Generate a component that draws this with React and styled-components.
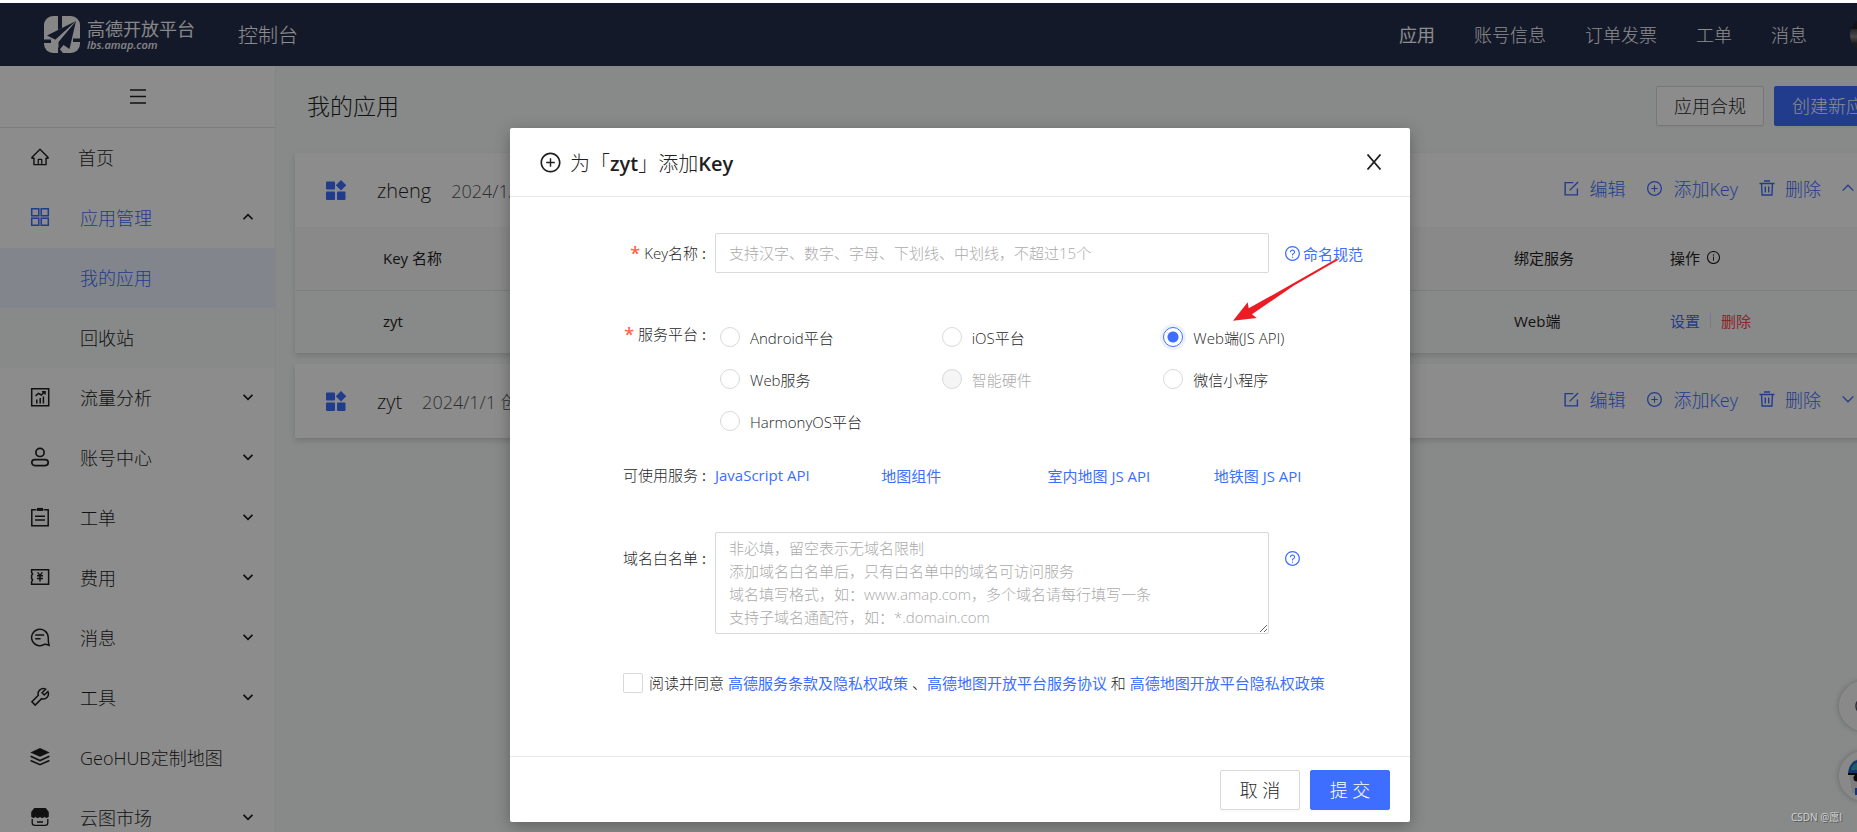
import { useState } from "react";
import styled, { createGlobalStyle } from "styled-components";
import {
  AiOutlineHome,
  AiOutlineInfoCircle,
  AiOutlinePlusCircle,
  AiOutlineQuestionCircle,
} from "react-icons/ai";

const GlobalStyle = createGlobalStyle`
  * {
    box-sizing: border-box;
  }

  body {
    margin: 0;
    overflow: hidden;
    background-color: #fff;
    color: #1f1f1f;
    font-family: "Open Sans", "Noto Sans CJK SC", sans-serif;
    font-size: 15px;
    font-weight: 300;
  }

  button, input, textarea {
    font: inherit;
    color: inherit;
  }

  button {
    padding: 0;
    border: 0;
    background: none;
    cursor: pointer;
  }

  a {
    color: #3d6eff;
    text-decoration: none;
  }

  svg {
    display: block;
    flex-shrink: 0;
  }
`;

const Shell = styled.div`
  position: relative;
  display: flex;
  flex-direction: column;
  min-width: 1920px;
  height: 100vh;
  padding-top: 3px;
  overflow: hidden;
`;

/* header */

const StyledHeader = styled.header`
  display: flex;
  align-items: center;
  flex-shrink: 0;
  height: 63px;
  padding: 0 36px 0 44px;
  background-color: #262e4e;
  color: #fff;
`;

const Logo = styled.a`
  display: flex;
  align-items: center;
  gap: 7px;
  color: #f4f4f4;
`;

const LogoText = styled.span`
  display: flex;
  flex-direction: column;
  font-size: 18px;
  line-height: 20px;
  font-weight: 400;
`;

const LogoDomain = styled.small`
  font-size: 11px;
  line-height: 12px;
  font-weight: 600;
  font-style: italic;
`;

const ConsoleLink = styled.a`
  margin-left: 43px;
  padding-bottom: 1px;
  color: inherit;
  font-size: 20px;
`;

const StyledNav = styled.nav`
  display: flex;
  align-items: center;
  gap: 39px;
  margin-left: auto;
  font-size: 18px;
`;

const NavLink = styled.a`
  padding-bottom: 2px;
  color: #fff;
  font-weight: ${(props) => (props.$active ? 400 : 300)};
`;

const Avatar = styled.span`
  width: 34px;
  height: 34px;
  margin-left: 4px;
  border-radius: 50%;
  background: linear-gradient(#222 32%, #444 32%, #888 55%, #333 75%);
`;

/* sidebar */

const Columns = styled.div`
  display: flex;
  flex: 1;
  min-height: 0;
`;

const Sidebar = styled.aside`
  width: 276px;
  flex-shrink: 0;
  border-right: 1px solid #f0f0f0;
  overflow: hidden;
`;

const Toggle = styled.button`
  display: flex;
  align-items: center;
  justify-content: center;
  width: 100%;
  height: 62px;
  border-bottom: 1px solid #e4e4e4;
`;

const MenuLink = styled.a`
  display: flex;
  align-items: center;
  gap: ${(props) => props.$gap || 30}px;
  height: 60px;
  padding: 0 22px 2px ${(props) => (props.$sub ? 80 : 30)}px;
  background-color: ${(props) => props.$bg || "transparent"};
  color: ${(props) => (props.$active ? "#3d6eff" : "#1f1f1f")};
  font-size: 18px;

  > span + svg {
    margin-left: auto;
    color: #1f1f1f;
  }
`;

/* content */

const Main = styled.main`
  flex: 1;
  min-width: 0;
  padding: 20px 20px 0 19px;
  background-color: #f7fbf9;
`;

const TitleBar = styled.div`
  display: flex;
  align-items: center;
  gap: 10px;
  height: 40px;
  margin-bottom: 27px;
`;

const Title = styled.h1`
  margin: 0 auto 0 12px;
  padding-bottom: 2px;
  font-size: 23px;
  font-weight: 300;
`;

const Button = styled.button`
  min-width: 80px;
  height: 40px;
  padding: 0 17px;
  border: 1px solid ${(props) => (props.$primary ? "#3d6eff" : "#d9d9d9")};
  border-radius: 2px;
  background-color: ${(props) => (props.$primary ? "#3d6eff" : "#fff")};
  color: ${(props) => (props.$primary ? "#fff" : "#1f1f1f")};
  box-shadow: 0 2px 0 rgba(0, 0, 0, 0.02);
  font-size: 18px;
  line-height: 24px;
  white-space: nowrap;
`;

const Card = styled.section`
  margin-bottom: 11px;
  background-color: #fff;
  box-shadow: 0 3px 6px rgba(0, 0, 0, 0.14);
`;

const CardHead = styled.div`
  display: flex;
  align-items: center;
  height: 74px;
  padding: 0 46px 0 31px;
`;

const AppName = styled.h2`
  margin: 0 20px 0 31px;
  font-size: 20px;
  font-weight: 300;
`;

const AppDate = styled.span`
  color: #555;
  font-size: 18px;
`;

const Actions = styled.div`
  display: flex;
  align-items: center;
  gap: 21px;
  margin-left: auto;
  padding-bottom: 4px;
  color: #3d6eff;
`;

const Action = styled.button`
  display: flex;
  align-items: center;
  gap: 10px;
  font-size: 18px;
`;

const KeyTable = styled.table`
  width: 100%;
  border-collapse: collapse;
  table-layout: fixed;
  text-align: left;

  th {
    height: 63px;
    padding: 0 0 2px;
    border-bottom: 1px solid #e4e6e5;
    background-color: #f9f9f9;
    font-weight: 400;
  }

  td {
    height: 63px;
    padding: 0 0 2px;
    background-color: #f7fbf9;
    font-weight: 400;
  }

  th:first-child,
  td:first-child {
    padding-left: 88px;
  }

  th:nth-child(2) {
    width: 156px;
  }

  th:last-child {
    width: 230px;
  }
`;

const Inline = styled.span`
  display: flex;
  align-items: center;
  gap: ${(props) => props.$gap}px;
`;

const Divider = styled.i`
  width: 1px;
  height: 15px;
  background-color: #e0e0e0;
`;

const DangerLink = styled.a`
  color: #f5484d;
`;

/* floating helpers */

const Helpers = styled.div`
  position: absolute;
  right: 31px;
  bottom: 31px;
  display: flex;
  flex-direction: column;
  gap: 20px;
`;

const HelperButton = styled.button`
  display: flex;
  align-items: center;
  justify-content: center;
  width: 50px;
  height: 50px;
  border: 1px solid #fff;
  border-radius: 50%;
  background-color: #fafafa;
  box-shadow: 0 0 6px rgba(0, 0, 0, 0.25);
`;

/* modal */

const Mask = styled.div`
  position: absolute;
  inset: 3px 0 0;
  display: flex;
  align-items: flex-start;
  justify-content: center;
  padding-top: 125px;
  background-color: rgba(0, 0, 0, 0.45);
`;

const Dialog = styled.form`
  position: relative;
  width: 900px;
  border-radius: 2px;
  background-color: #fff;
  box-shadow: 0 4px 16px rgba(0, 0, 0, 0.3);
`;

const DialogHead = styled.div`
  display: flex;
  align-items: center;
  gap: 8px;
  height: 69px;
  padding: 0 28px 0 29px;
  border-bottom: 1px solid #e8e8e8;

  h2 {
    margin: 0 auto 0 0;
    font-size: 20px;
    font-weight: 300;
  }

  b {
    font-weight: 600;
  }
`;

const DialogBody = styled.div`
  padding: 36px 30px 63px 0;

  a {
    font-weight: 400;
  }
`;

const Field = styled.div`
  display: grid;
  grid-template-columns: 205px 1fr;
  margin-bottom: ${(props) => props.$below}px;
`;

const FieldLabel = styled.label`
  display: flex;
  justify-content: flex-end;
  height: ${(props) => props.$height || 40}px;
  padding-right: 9px;
  line-height: ${(props) => props.$height || 40}px;

  &::before {
    content: ${(props) => (props.$required ? '"*"' : "none")};
    margin-right: 4px;
    color: #ff6340;
    font-size: 18px;
    font-weight: 600;
  }

  &::after {
    content: ":";
    margin-left: 4px;
    font-weight: 400;
  }
`;

const FieldBody = styled.div`
  display: flex;
  align-items: ${(props) => props.$align || "center"};
`;

const TextInput = styled.input`
  width: 554px;
  height: 40px;
  padding: 0 13px;
  border: 1px solid #d9d9d9;
  border-radius: 2px;

  &::placeholder {
    color: #aaa;
  }
`;

const TextArea = styled.textarea`
  display: block;
  width: 554px;
  height: 102px;
  padding: 4px 13px;
  border: 1px solid #d9d9d9;
  border-radius: 2px;
  line-height: 23px;
  overflow: hidden;
  resize: vertical;

  &::placeholder {
    color: #aaa;
  }
`;

const HelpLink = styled.a`
  display: flex;
  align-items: center;
  gap: 2px;
  height: ${(props) => props.$height || 40}px;
  margin-left: 15px;
  white-space: nowrap;
`;

const RadioGrid = styled.div`
  display: grid;
  grid-template-columns: repeat(3, 1fr);
  flex: 1;
`;

const RadioLabel = styled.label`
  display: flex;
  align-items: center;
  gap: 10px;
  height: 42px;
  padding-left: 5px;
  color: ${(props) => (props.$disabled ? "#aaa" : "#1f1f1f")};
`;

const Radio = styled.input`
  appearance: none;
  width: 20px;
  height: 20px;
  margin: 0;
  border: 1px solid #d9d9d9;
  border-radius: 50%;
  background-color: #fff;

  &:checked {
    border-color: #3d6eff;
    background: radial-gradient(circle, #3d6eff 5px, #fff 6px);
    box-shadow: 0 0 0 3px #edf2ff;
  }

  &:disabled {
    background-color: #f5f5f5;
  }
`;

const ServiceLinks = styled.div`
  display: grid;
  grid-template-columns: repeat(4, 1fr);
  flex: 1;
`;

const Agreement = styled.div`
  display: flex;
  align-items: center;
  gap: 4px;
  padding-left: 113px;
  white-space: nowrap;

  label {
    display: flex;
    align-items: center;
    gap: 6px;
  }
`;

const Checkbox = styled.input`
  appearance: none;
  width: 20px;
  height: 20px;
  margin: 0;
  border: 1px solid #d9d9d9;
  border-radius: 2px;

  &:checked {
    background-color: #3d6eff;
  }
`;

const DialogFoot = styled.div`
  display: flex;
  justify-content: flex-end;
  gap: 10px;
  padding: 13px 20px 12px;
  border-top: 1px solid #e8e8e8;
`;

const Arrow = styled.svg`
  position: absolute;
  top: 130px;
  left: 722px;
  pointer-events: none;
`;

const Watermark = styled.span`
  position: absolute;
  left: 1791px;
  bottom: 8px;
  color: #d4d4d4;
  font-size: 10px;
  line-height: 14px;
  font-weight: 400;
  text-shadow: 1px 1px 0 #555;
`;

/* icons */

const Icon = ({ size = 20, box = 20, width = 1.5, children }) => (
  <svg
    width={size}
    height={size}
    viewBox={`0 0 ${box} ${box}`}
    fill="none"
    stroke="currentColor"
    strokeWidth={width}
  >
    {children}
  </svg>
);

const Chevron = ({ up, size = 10, width = 1.8 }) => (
  <Icon size={size} box={10} width={width}>
    <path d={up ? "M0.5 7.2 5 2.7l4.5 4.5" : "M0.5 2.8 5 7.3l4.5-4.5"} />
  </Icon>
);

const menuIcons = {
  home: <AiOutlineHome size={20} />,
  apps: (
    <Icon>
      <path d="M1.7 1.7h7.1v7.1H1.7zM11.2 1.7h7.1v7.1h-7.1zM1.7 11.2h7.1v7.1H1.7zM11.2 11.2h7.1v7.1h-7.1z" />
    </Icon>
  ),
  chart: (
    <Icon>
      <path d="M1.7 1.7h17v17h-17z" />
      <path d="M6.8 12.5v4M10.2 11v5.5M13.4 9.5v7M5.5 8.8l3-2.4 2.8 1.6 3.4-3.2M12 4.8h3v2.6" />
    </Icon>
  ),
  user: (
    <Icon width={1.7}>
      <circle cx="10" cy="5.4" r="4.1" />
      <rect x="1.8" y="12.6" width="16.4" height="6" rx="3" />
    </Icon>
  ),
  order: (
    <Icon>
      <path d="M6.5 2.7H1.8v16h16.4v-16h-4.7M5 9.3h10M5 13h10" />
      <path d="M7 2.4h6" strokeWidth="3" />
    </Icon>
  ),
  cost: (
    <Icon>
      <path d="M1.6 2.7h17v14.6h-17v-2.6l1-1.6-1-1.6V8.4l1-1.5-1-1.5z" />
      <path d="m7.6 5.4 2.4 3 2.4-3M7 8.7h6M7 11.4h6M10 8.4v6.2" />
    </Icon>
  ),
  message: (
    <Icon>
      <path d="M18.2 10c0 3 .2 6 .9 8.400-1.500-.6-3-.9-4.300-1.200A8.300 8.300 0 1 1 18.200 10zM5.200 8h9M5.200 11.700h5.400" />
    </Icon>
  ),
  tool: (
    <Icon>
      <path d="M15.6 2.2a5.2 5.2 0 0 0-7.3 6.2L1.9 14.8l3.3 3.3 6.4-6.4a5.2 5.2 0 0 0 6.3-7.2l-3.6 3.5-2.2-2.2z" />
    </Icon>
  ),
  layers: (
    <Icon width={1.6}>
      <path d="M10 1 0.3 5.4 10 9.7l9.7-4.3z" fill="currentColor" stroke="none" />
      <path d="m0.6 9.3 9.4 4.2 9.4-4.2M0.6 13.5l9.4 4.2 9.4-4.2" />
    </Icon>
  ),
  market: (
    <Icon width={1.3}>
      <path
        d="M4.2 1h11.6L18.800 5v4.500c-1.200 2-3.400 1.800-4.400.3-1.100 1.600-3.300 1.600-4.400 0-1.100 1.600-3.300 1.600-4.400 0-1 1.500-3.200 1.700-4.400-.3V5z"
        fill="currentColor"
        stroke="none"
      />
      <path d="M2.2 12v3.800a2.600 2.600 0 0 0 2.600 2.600h10.400a2.600 2.600 0 0 0 2.600-2.600V12M7 15h6" />
    </Icon>
  ),
};

const LogoMark = () => (
  <svg width="36" height="37" viewBox="0 0 36 37">
    <rect width="36" height="37" rx="9" fill="#f4f4f4" />
    <path d="M14 0h4v12l-4 2zM0 23.500h7v3.500H0zM29 22.500h7V26h-7zM14 31l5 6h-5z" fill="#262e4e" />
    <path d="M32 5 3 19.500l9 4.500zM32 5 14.500 26v9l5-6 6 4z" fill="#262e4e" />
    <path d="M32 5 11 24l3 1.500z" fill="#f4f4f4" />
  </svg>
);

const AppIcon = () => (
  <svg width="20" height="20" viewBox="0 0 20 20" fill="#3d6eff">
    <rect y="1.5" width="9" height="8" rx="1" />
    <rect y="11.5" width="9" height="8.500" rx="1" />
    <rect x="11" y="11.5" width="8.500" height="8.500" rx="1" />
    <path d="m15 0 5.2 5.2L15 10.4 9.8 5.2z" />
  </svg>
);

const EditIcon = () => (
  <Icon size={15} box={16} width={1.5}>
    <path d="M10 1.7H1.2v13.1h13.1V8M6 10l9-9" />
  </Icon>
);

const TrashIcon = () => (
  <Icon size={16} box={16} width={1.4}>
    <path d="M0.5 3.5h15M5 1h6M2.5 3.5l.6 11.500h9.800l.6-11.500M6.300 6.500v6M9.700 6.500v6" />
  </Icon>
);

const CloseIcon = () => (
  <Icon size={16} box={16} width={1.8}>
    <path d="M1.500 .5l13 15M14.500 .5l-13 15" />
  </Icon>
);

const Robot = () => (
  <svg width="34" height="42" viewBox="0 0 34 42">
    <path d="M6 6 17 1l11 5 4 12-3 20H5L2 18z" fill="#e4e4e4" />
    <path d="M1 18C2 8 8 4 17 4s15 4 16 14z" fill="#1f62c8" />
    <path d="M4 15c1-6 5-8 13-8s12 2 13 8z" fill="#3fa9b8" />
    <path d="M1 18h32v2H1z" fill="#111" />
    <circle cx="10" cy="23" r="3.5" fill="#111" />
    <circle cx="24" cy="23" r="3.5" fill="#111" />
    <path d="M8 33h18v7H8z" fill="#2460d8" />
  </svg>
);

const menu = [
  { icon: "home", label: "首页", gap: 28 },
  { icon: "apps", label: "应用管理", active: true, open: true },
  { label: "我的应用", sub: true, active: true, bg: "#eef3ff" },
  { label: "回收站", sub: true, bg: "#f7fbf9" },
  { icon: "chart", label: "流量分析", more: true },
  { icon: "user", label: "账号中心", more: true },
  { icon: "order", label: "工单", more: true },
  { icon: "cost", label: "费用", more: true },
  { icon: "message", label: "消息", more: true },
  { icon: "tool", label: "工具", more: true },
  { icon: "layers", label: "GeoHUB定制地图" },
  { icon: "market", label: "云图市场", more: true },
];

const platforms = [
  { label: "Android平台" },
  { label: "iOS平台" },
  { label: "Web端(JS API)" },
  { label: "Web服务" },
  { label: "智能硬件", disabled: true },
  { label: "微信小程序" },
  { label: "HarmonyOS平台" },
];

const services = ["JavaScript API", "地图组件", "室内地图 JS API", "地铁图 JS API"];

const whitelistHint = `非必填，留空表示无域名限制
添加域名白名单后，只有白名单中的域名可访问服务
域名填写格式，如：www.amap.com，多个域名请每行填写一条
支持子域名通配符，如：*.domain.com`;

function AppCard({ name, date, open, children }) {
  return (
    <Card>
      <CardHead>
        <AppIcon />
        <AppName>{name}</AppName>
        <AppDate>{date} 创建</AppDate>
        <Actions>
          <Action><EditIcon />编辑</Action>
          <Action><AiOutlinePlusCircle size={17} />添加Key</Action>
          <Action><TrashIcon />删除</Action>
          <Action aria-label="展开"><Chevron up={open} size={12} width={1.1} /></Action>
        </Actions>
      </CardHead>
      {children}
    </Card>
  );
}

function AddKeyDialog() {
  const [platform, setPlatform] = useState("Web端(JS API)");

  return (
    <Dialog role="dialog" aria-labelledby="dialog-title">
      <DialogHead>
        <AiOutlinePlusCircle size={23} />
        <h2 id="dialog-title">为「<b>zyt</b>」添加<b>Key</b></h2>
        <button type="button" aria-label="关闭"><CloseIcon /></button>
      </DialogHead>
      <DialogBody>
        <Field $below={43}>
          <FieldLabel $required htmlFor="key-name">Key名称</FieldLabel>
          <FieldBody>
            <TextInput id="key-name" placeholder="支持汉字、数字、字母、下划线、中划线，不超过15个" />
            <HelpLink href="#naming"><AiOutlineQuestionCircle size={17} />命名规范</HelpLink>
          </FieldBody>
        </Field>
        <Field $below={13}>
          <FieldLabel as="span" $required $height={36} id="platform-label">服务平台</FieldLabel>
          <RadioGrid role="radiogroup" aria-labelledby="platform-label">
            {platforms.map(({ label, disabled }) => (
              <RadioLabel key={label} $disabled={disabled}>
                <Radio
                  type="radio"
                  name="platform"
                  disabled={disabled}
                  checked={platform === label}
                  onChange={() => setPlatform(label)}
                />
                {label}
              </RadioLabel>
            ))}
          </RadioGrid>
        </Field>
        <Field $below={37}>
          <FieldLabel as="span">可使用服务</FieldLabel>
          <FieldBody>
            <ServiceLinks>
              {services.map((name) => <a key={name} href="#service">{name}</a>)}
            </ServiceLinks>
          </FieldBody>
        </Field>
        <Field $below={38}>
          <FieldLabel htmlFor="whitelist" $height={52}>域名白名单</FieldLabel>
          <FieldBody $align="flex-start">
            <TextArea id="whitelist" placeholder={whitelistHint} />
            <HelpLink href="#whitelist-help" aria-label="帮助" $height={52}>
              <AiOutlineQuestionCircle size={17} />
            </HelpLink>
          </FieldBody>
        </Field>
        <Agreement>
          <label><Checkbox type="checkbox" />阅读并同意</label>
          <span>
            <a href="#terms">高德服务条款及隐私权政策</a> 、<a href="#service-agreement">高德地图开放平台服务协议</a>{" "}
            和 <a href="#privacy">高德地图开放平台隐私权政策</a>
          </span>
        </Agreement>
      </DialogBody>
      <DialogFoot>
        <Button type="button">取 消</Button>
        <Button type="button" $primary>提 交</Button>
      </DialogFoot>
      <Arrow width="110" height="66" viewBox="0 0 110 66" fill="#ed1c24">
        <path d="M1 62.700 15.700 44.300l1 6L46 34 104 1l3 .5L62 27.500 20 56.300l4.700 3.700z" />
      </Arrow>
    </Dialog>
  );
}

export default function App() {
  return (
    <>
      <GlobalStyle />
      <Shell>
        <StyledHeader>
          <Logo href="#home">
            <LogoMark />
            <LogoText>高德开放平台<LogoDomain>lbs.amap.com</LogoDomain></LogoText>
          </Logo>
          <ConsoleLink href="#console">控制台</ConsoleLink>
          <StyledNav>
            <NavLink href="#apps" $active>应用</NavLink>
            <NavLink href="#account">账号信息</NavLink>
            <NavLink href="#invoice">订单发票</NavLink>
            <NavLink href="#tickets">工单</NavLink>
            <NavLink href="#messages">消息</NavLink>
            <Avatar />
          </StyledNav>
        </StyledHeader>
        <Columns>
          <Sidebar>
            <Toggle aria-label="收起菜单">
              <Icon size={16} box={16}><path d="M0 1h16M0 7.500h16M0 14h16" /></Icon>
            </Toggle>
            {menu.map(({ icon, label, sub, active, bg, gap, open, more }) => (
              <MenuLink key={label} href="#menu" $sub={sub} $active={active} $bg={bg} $gap={gap}>
                {menuIcons[icon]}
                <span>{label}</span>
                {(open || more) && <Chevron up={open} />}
              </MenuLink>
            ))}
          </Sidebar>
          <Main>
            <TitleBar>
              <Title>我的应用</Title>
              <Button>应用合规</Button>
              <Button $primary>创建新应用</Button>
            </TitleBar>
            <AppCard name="zheng" date="2024/1/1" open>
              <KeyTable>
                <thead>
                  <tr>
                    <th>Key 名称</th>
                    <th>绑定服务</th>
                    <th><Inline $gap={6}>操作 <AiOutlineInfoCircle size={15} /></Inline></th>
                  </tr>
                </thead>
                <tbody>
                  <tr>
                    <td>zyt</td>
                    <td>Web端</td>
                    <td>
                      <Inline $gap={10}>
                        <a href="#settings">设置</a>
                        <Divider />
                        <DangerLink href="#delete">删除</DangerLink>
                      </Inline>
                    </td>
                  </tr>
                </tbody>
              </KeyTable>
            </AppCard>
            <AppCard name="zyt" date="2024/1/1" />
          </Main>
        </Columns>
        <Helpers>
          <HelperButton aria-label="客服"><AiOutlineQuestionCircle size={20} color="#556" /></HelperButton>
          <HelperButton aria-label="助手"><Robot /></HelperButton>
        </Helpers>
        <Mask>
          <AddKeyDialog />
        </Mask>
        <Watermark>CSDN @愿I</Watermark>
      </Shell>
    </>
  );
}
